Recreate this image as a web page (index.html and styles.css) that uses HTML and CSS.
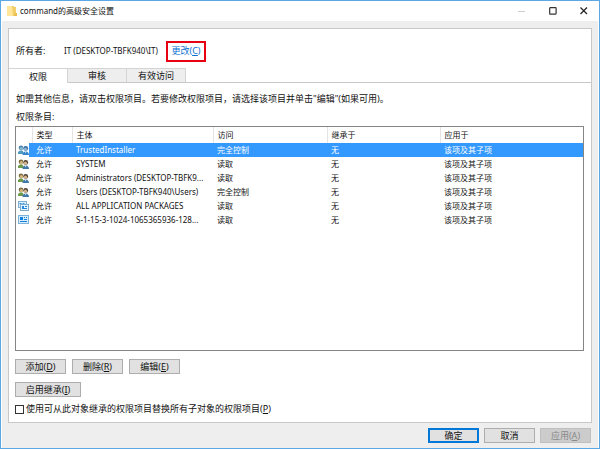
FILE: index.html
```html
<!DOCTYPE html>
<html lang="zh-CN">
<head>
<meta charset="utf-8">
<title>command的高级安全设置</title>
<link rel="stylesheet" href="styles.css">
</head>
<body>
<svg class="defs" aria-hidden="true">
  <symbol id="people" viewBox="0 0 11 10">
    <path d="M0 9V7.200Q.5 5.500 3 5.200Q5.500 5.500 6 9Z" fill="#6f9a4c"/>
    <circle cx="3" cy="2.800" r="2.300" fill="#7a6a3c"/>
    <circle cx="3.400" cy="3.400" r="1.500" fill="#d9bd84"/>
    <path d="M4.500 10Q4.700 6.600 7.800 6.200Q10.700 6.600 11 10Z" fill="#3f78a8"/>
    <circle cx="7.700" cy="3.400" r="2.400" fill="#4c4030"/>
    <circle cx="7.500" cy="4.200" r="1.600" fill="#d8b48a"/>
    <path d="M7 6.500h1.400L7.700 8.500Z" fill="#fff"/>
  </symbol>
  <symbol id="people-selected" viewBox="0 0 11 10">
    <path d="M0 9V7.200Q.5 5.500 3 5.200Q5.500 5.500 6 9Z" fill="#4f9bbf"/>
    <circle cx="3" cy="2.800" r="2.300" fill="#4a86ad"/>
    <circle cx="3.400" cy="3.400" r="1.500" fill="#8cb9cf"/>
    <path d="M4.500 10Q4.700 6.600 7.800 6.200Q10.700 6.600 11 10Z" fill="#3585cc"/>
    <circle cx="7.700" cy="3.400" r="2.400" fill="#2f6ba5"/>
    <circle cx="7.500" cy="4.200" r="1.600" fill="#8db3d3"/>
    <path d="M7 6.500h1.400L7.700 8.500Z" fill="#d5ebff"/>
  </symbol>
  <symbol id="packages" viewBox="0 0 11 10">
    <rect x=".5" y=".5" width="8" height="6" fill="#d9efff" stroke="#7fb0d2"/>
    <path d="M1.500 2h2v1h-2zM4.500 2h2v1h-2z" fill="#3a97e0"/>
    <rect x="2.500" y="3.500" width="8" height="6" fill="#e6f5ff" stroke="#7fa9c8"/>
    <path d="M4 5h2v2H4zM7 5h2v1H7zM4 7h5v1H4z" fill="#2389e0"/>
  </symbol>
  <symbol id="package" viewBox="0 0 11 10">
    <rect x=".5" y=".5" width="10" height="8" fill="#d7eeff" stroke="#7fb0d6"/>
    <path d="M2 2h3v3H2zM6 2h1v1H6zM8 2h1v1H8zM6 4h3v1H6zM2 6h7v1H2z" fill="#1680df"/>
  </symbol>
</svg>
<div class="window">
  <header class="titlebar">
    <svg class="folder" viewBox="0 0 10 12" aria-hidden="true">
      <path d="M1 1h6v1h2v9H1z" fill="#f3ce68"/>
      <path d="M0 1h5l1 10H0z" fill="#ffe69a"/>
      <path d="M8 8h2v3H7z" fill="#e9bd50"/>
    </svg>
    <h1 class="title">command的高级安全设置</h1>
    <button class="caption" type="button" aria-label="最小化" disabled>
      <svg viewBox="0 0 8 8"><path d="M0 4.500h7" stroke="#ccc" fill="none"/></svg>
    </button>
    <button class="caption" type="button" aria-label="最大化">
      <svg viewBox="0 0 8 8"><rect x=".7" y=".7" width="6.400" height="6.400" rx=".5" stroke="#333" stroke-width="1.200" fill="none"/></svg>
    </button>
    <button class="caption" type="button" aria-label="关闭">
      <svg viewBox="0 0 8 8"><path d="M.5.500l6.500 6.500M7 .5L.5 7" stroke="#222" stroke-width="1.200" fill="none"/></svg>
    </button>
  </header>
  <main class="body">
    <section class="panel">
      <div class="owner">
        <span class="owner-label">所有者:</span>
        <span class="owner-name">IT (DESKTOP-TBFK940\IT)</span>
        <a class="change" href="#change">更改(<u>C</u>)</a>
      </div>
      <div class="tabs" role="tablist">
        <button class="tab selected" type="button" role="tab" aria-selected="true">权限</button>
        <button class="tab" type="button" role="tab" aria-selected="false">审核</button>
        <button class="tab" type="button" role="tab" aria-selected="false">有效访问</button>
      </div>
      <div class="page">
        <p class="line">如需其他信息，请双击权限项目。若要修改权限项目，请选择该项目并单击"编辑"(如果可用)。</p>
        <p class="line" id="entries">权限条目:</p>
        <div class="list">
          <table aria-labelledby="entries">
            <colgroup><col class="c-icon"><col class="c-type"><col class="c-name"><col class="c-access"><col class="c-from"><col></colgroup>
            <thead>
              <tr><th></th><th>类型</th><th>主体</th><th>访问</th><th>继承于</th><th>应用于</th></tr>
            </thead>
            <tbody>
              <tr class="current"><td><svg class="icon"><use href="#people-selected"/></svg></td><td>允许</td><td>TrustedInstaller</td><td>完全控制</td><td>无</td><td>该项及其子项</td></tr>
              <tr><td><svg class="icon"><use href="#people"/></svg></td><td>允许</td><td>SYSTEM</td><td>读取</td><td>无</td><td>该项及其子项</td></tr>
              <tr><td><svg class="icon"><use href="#people"/></svg></td><td>允许</td><td>Administrators (DESKTOP-TBFK9...</td><td>读取</td><td>无</td><td>该项及其子项</td></tr>
              <tr><td><svg class="icon"><use href="#people"/></svg></td><td>允许</td><td>Users (DESKTOP-TBFK940\Users)</td><td>完全控制</td><td>无</td><td>该项及其子项</td></tr>
              <tr><td><svg class="icon"><use href="#packages"/></svg></td><td>允许</td><td>ALL APPLICATION PACKAGES</td><td>读取</td><td>无</td><td>该项及其子项</td></tr>
              <tr><td><svg class="icon"><use href="#package"/></svg></td><td>允许</td><td>S-1-15-3-1024-1065365936-128...</td><td>读取</td><td>无</td><td>该项及其子项</td></tr>
            </tbody>
          </table>
        </div>
        <div class="actions">
          <button class="btn" type="button">添加(<u>D</u>)</button>
          <button class="btn" type="button">删除(<u>R</u>)</button>
          <button class="btn" type="button">编辑(<u>E</u>)</button>
        </div>
        <div class="actions">
          <button class="btn wide" type="button">启用继承(<u>I</u>)</button>
        </div>
        <label class="replace"><input type="checkbox">使用可从此对象继承的权限项目替换所有子对象的权限项目(<u>P</u>)</label>
      </div>
    </section>
    <footer class="footer">
      <button class="btn primary" type="button">确定</button>
      <button class="btn" type="button">取消</button>
      <button class="btn" type="button" disabled>应用(<u>A</u>)</button>
    </footer>
  </main>
</div>
</body>
</html>
```
FILE: styles.css
```css
* { box-sizing: border-box; }

body {
  margin: 0;
  color: #111;
  font: 9px/14px "Noto Sans", "Noto Sans CJK SC", sans-serif;
}

button, input { font: inherit; color: inherit; margin: 0; }
svg { display: block; }
.defs { position: absolute; width: 0; height: 0; }

.window {
  display: flex;
  flex-direction: column;
  min-height: 100vh;
  border: 1px solid #5aa9e6;
  background: #fff;
}

.titlebar {
  display: flex;
  align-items: center;
  height: 20px;
  padding-left: 6px;
}
.folder { width: 10px; height: 12px; }
.title {
  flex: 1;
  margin: 0 0 0 3px;
  font-size: 8px;
  font-weight: 400;
}
.caption {
  display: flex;
  align-items: center;
  justify-content: center;
  width: 31px;
  height: 19px;
  padding: 0;
  border: 0;
  background: none;
}
.caption svg { width: 8px; height: 8px; }

.body {
  flex: 1;
  display: flex;
  flex-direction: column;
  margin: 0 1px;
  padding: 7px 6px 5px;
  background: #eee;
}

.panel {
  flex: 1;
  display: flex;
  flex-direction: column;
  border: 1px solid #c8c8c8;
  background: #fff;
}

.owner {
  display: flex;
  align-items: center;
  height: 39px;
  padding: 5px 7px 0;
}
.owner-label { width: 48px; }
.owner-name { width: 102px; font-size: 8px; white-space: nowrap; }
.change {
  display: flex;
  align-items: center;
  justify-content: center;
  width: 40px;
  height: 21px;
  border: 2px solid #e60012;
  color: #0b6fd0;
  text-decoration: none;
}

.tabs {
  display: flex;
  border-bottom: 1px solid #c8c8c8;
}
.tab {
  width: 59px;
  height: 14px;
  padding: 0;
  border: solid #d4d4d4;
  border-width: 1px 1px 0 0;
  background: #eee;
  line-height: 13px;
}
.tab.selected {
  height: 15px;
  margin-bottom: -1px;
  background: #fff;
}

.page {
  flex: 1;
  display: flex;
  flex-direction: column;
  padding: 8px 7px 6px 6px;
}
.line { margin: 0 0 3px 1px; line-height: 15px; }
.line + .line { margin-bottom: 2px; }

.list {
  flex: 1;
  border: 1px solid #858585;
  background: #fff;
}
table {
  width: 100%;
  table-layout: fixed;
  border-collapse: collapse;
  font-size: 8px;
}
.c-icon { width: 16px; }
.c-type { width: 40px; }
.c-name { width: 141px; }
.c-access { width: 114px; }
.c-from { width: 113px; }
th, td {
  height: 14px;
  padding: 0 0 0 4px;
  line-height: 14px;
  text-align: left;
  font-weight: 400;
  white-space: nowrap;
}
th { height: 16px; line-height: 16px; border-right: 1px solid #e4e4e4; }
th:last-child { border-right: 0; }
td:first-child { padding-left: 2px; }
.icon { width: 11px; height: 10px; }
.current { color: #fff; }
.current td { background: #3399ff; }
.current td:first-child { background: linear-gradient(90deg, #fff 13px, #3399ff 13px); }

.actions { display: flex; gap: 6px; margin-top: 8px; }
.btn {
  width: 51px;
  height: 15px;
  padding: 0;
  border: 1px solid #adadad;
  background: #e1e1e1;
  line-height: 13px;
  white-space: nowrap;
}
.btn.wide { width: 66px; }
.btn.primary { border: 1px solid #0078d7; outline: 1px solid #0078d7; outline-offset: -2px; }
.btn:disabled { border-color: #bfbfbf; background: #ccc; color: #8a8a8a; }

.replace {
  display: flex;
  align-items: center;
  margin-top: 5px;
  white-space: nowrap;
}
.replace input {
  appearance: none;
  width: 9px;
  height: 9px;
  margin-right: 2px;
  border: 1px solid #333;
  background: #fff;
}

.footer {
  display: flex;
  justify-content: flex-end;
  gap: 5px;
  padding: 5px 1px 0 0;
}
```
